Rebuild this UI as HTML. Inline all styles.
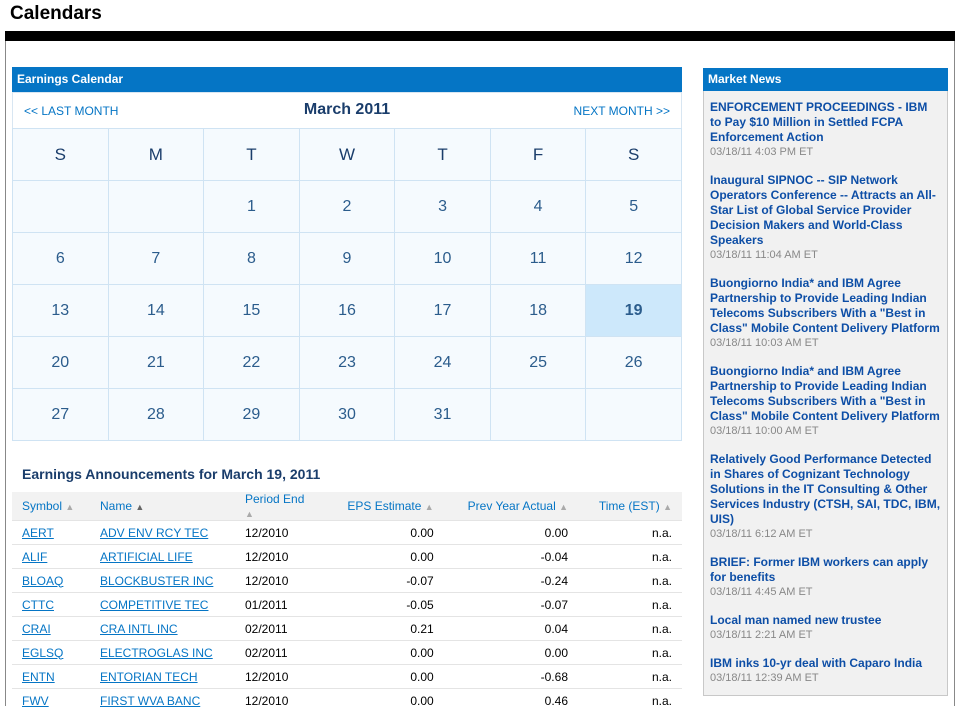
<!DOCTYPE html>
<html><head><style>
*{margin:0;padding:0;box-sizing:border-box}
body{width:959px;height:706px;overflow:hidden;background:#fff;font-family:"Liberation Sans",Arial,sans-serif;position:relative}
h1{position:absolute;left:10px;top:3px;font-size:19px;font-weight:bold;color:#000}
.bar{position:absolute;left:5px;top:31px;width:950px;height:10px;background:#000}
.lb{position:absolute;left:5px;top:41px;width:1px;height:665px;background:#888}
.rb{position:absolute;left:954px;top:41px;width:1px;height:665px;background:#888}
.hdr{position:absolute;background:#0575c5;color:#fff;font-size:12px;font-weight:bold;padding-left:5px;line-height:25px}
.nav{position:absolute;left:12px;top:92px;width:670px;height:37px;border:1px solid #d8e6f2;border-bottom:1px solid #9cc1e0;font-size:12px;color:#0575c5}
.nav .l{position:absolute;left:11px;top:11px}
.nav .r{position:absolute;right:11px;top:11px}
.nav .m{position:absolute;left:0;right:0;top:8px;text-align:center;font-size:16px;font-weight:bold;color:#1a3d6b}
table.cal{position:absolute;left:12px;top:128px;width:670px;border-collapse:collapse;table-layout:fixed}
table.cal td{border:1px solid #cfe3f3;height:52px;text-align:center;font-size:16px;color:#2b5c8c;background:#f5fafe}
table.cal tr.h td{font-size:17px;color:#1a3d6b;background:#f5fafe}
table.cal td.sel{background:#cde8fb;font-weight:bold}
.at{position:absolute;left:22px;top:466px;font-size:14px;font-weight:bold;color:#1a3d6b}
table.ea{position:absolute;left:12px;top:492px;width:670px;border-collapse:collapse;font-size:12px}
table.ea th{background:#f2f2f2;color:#0575c5;font-weight:normal;height:24px;text-align:left;padding:0 10px}
table.ea td{height:24px;border-top:1px solid #e4e4e4;padding:0 10px;color:#000}
table.ea td a{color:#0575c5;text-decoration:underline}
.ar{color:#aaa;font-size:9px}
.rt{text-align:right!important}
.news{position:absolute;left:703px;top:91px;width:245px;height:605px;background:#f1f1f1;border:1px solid #c8c8c8;border-top:none;padding:9px 6px}
.news div{margin-bottom:14px}
.news a{display:block;color:#0d4ea6;font-size:12px;font-weight:bold;line-height:15px;text-decoration:none}
.news span{display:block;color:#888;font-size:11px;line-height:14px}
</style></head><body>
<h1>Calendars</h1>
<div class="bar"></div><div class="lb"></div><div class="rb"></div>
<div class="hdr" style="left:12px;top:67px;width:670px;height:25px">Earnings Calendar</div>
<div class="nav"><span class="l">&lt;&lt; LAST MONTH</span><span class="m">March 2011</span><span class="r">NEXT MONTH &gt;&gt;</span></div>
<table class="cal">
<tr class="h"><td>S</td><td>M</td><td>T</td><td>W</td><td>T</td><td>F</td><td>S</td></tr>
<tr><td></td><td></td><td>1</td><td>2</td><td>3</td><td>4</td><td>5</td></tr>
<tr><td>6</td><td>7</td><td>8</td><td>9</td><td>10</td><td>11</td><td>12</td></tr>
<tr><td>13</td><td>14</td><td>15</td><td>16</td><td>17</td><td>18</td><td class="sel">19</td></tr>
<tr><td>20</td><td>21</td><td>22</td><td>23</td><td>24</td><td>25</td><td>26</td></tr>
<tr><td>27</td><td>28</td><td>29</td><td>30</td><td>31</td><td></td><td></td></tr>
</table>
<div class="at">Earnings Announcements for March 19, 2011</div>
<table class="ea">
<tr><th style="width:78px">Symbol <span class="ar">&#9650;&#xFE0E;</span></th><th style="width:145px">Name <span class="ar" style="color:#666">&#9650;</span></th><th style="width:90px">Period End <span class="ar">&#9650;</span></th><th class="rt">EPS Estimate <span class="ar">&#9650;</span></th><th class="rt">Prev Year Actual <span class="ar">&#9650;</span></th><th class="rt">Time (EST) <span class="ar">&#9650;</span></th></tr>
<tr><td><a>AERT</a></td><td><a>ADV ENV RCY TEC</a></td><td>12/2010</td><td class="rt">0.00</td><td class="rt">0.00</td><td class="rt">n.a.</td></tr>
<tr><td><a>ALIF</a></td><td><a>ARTIFICIAL LIFE</a></td><td>12/2010</td><td class="rt">0.00</td><td class="rt">-0.04</td><td class="rt">n.a.</td></tr>
<tr><td><a>BLOAQ</a></td><td><a>BLOCKBUSTER INC</a></td><td>12/2010</td><td class="rt">-0.07</td><td class="rt">-0.24</td><td class="rt">n.a.</td></tr>
<tr><td><a>CTTC</a></td><td><a>COMPETITIVE TEC</a></td><td>01/2011</td><td class="rt">-0.05</td><td class="rt">-0.07</td><td class="rt">n.a.</td></tr>
<tr><td><a>CRAI</a></td><td><a>CRA INTL INC</a></td><td>02/2011</td><td class="rt">0.21</td><td class="rt">0.04</td><td class="rt">n.a.</td></tr>
<tr><td><a>EGLSQ</a></td><td><a>ELECTROGLAS INC</a></td><td>02/2011</td><td class="rt">0.00</td><td class="rt">0.00</td><td class="rt">n.a.</td></tr>
<tr><td><a>ENTN</a></td><td><a>ENTORIAN TECH</a></td><td>12/2010</td><td class="rt">0.00</td><td class="rt">-0.68</td><td class="rt">n.a.</td></tr>
<tr><td><a>FWV</a></td><td><a>FIRST WVA BANC</a></td><td>12/2010</td><td class="rt">0.00</td><td class="rt">0.46</td><td class="rt">n.a.</td></tr>
</table>
<div class="hdr" style="left:703px;top:68px;width:245px;height:23px;line-height:23px">Market News</div>
<div class="news">
<div><a>ENFORCEMENT PROCEEDINGS - IBM to Pay $10 Million in Settled FCPA Enforcement Action</a><span>03/18/11 4:03 PM ET</span></div>
<div><a>Inaugural SIPNOC -- SIP Network Operators Conference -- Attracts an All-Star List of Global Service Provider Decision Makers and World-Class Speakers</a><span>03/18/11 11:04 AM ET</span></div>
<div><a>Buongiorno India* and IBM Agree Partnership to Provide Leading Indian Telecoms Subscribers With a "Best in Class" Mobile Content Delivery Platform</a><span>03/18/11 10:03 AM ET</span></div>
<div><a>Buongiorno India* and IBM Agree Partnership to Provide Leading Indian Telecoms Subscribers With a "Best in Class" Mobile Content Delivery Platform</a><span>03/18/11 10:00 AM ET</span></div>
<div><a>Relatively Good Performance Detected in Shares of Cognizant Technology Solutions in the IT Consulting &amp; Other Services Industry (CTSH, SAI, TDC, IBM, UIS)</a><span>03/18/11 6:12 AM ET</span></div>
<div><a>BRIEF: Former IBM workers can apply for benefits</a><span>03/18/11 4:45 AM ET</span></div>
<div><a>Local man named new trustee</a><span>03/18/11 2:21 AM ET</span></div>
<div><a>IBM inks 10-yr deal with Caparo India</a><span>03/18/11 12:39 AM ET</span></div>
</div>
</body></html>
